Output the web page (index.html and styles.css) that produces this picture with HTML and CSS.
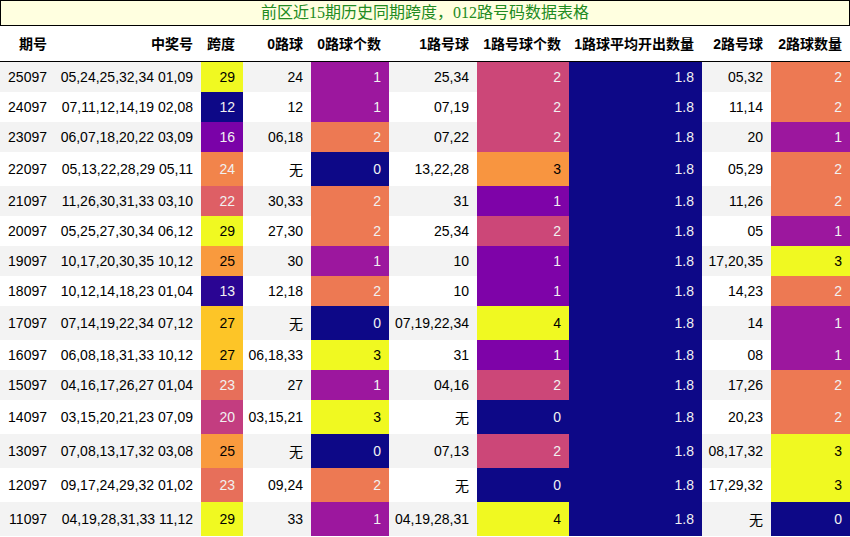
FILE: index.html
```html
<!DOCTYPE html>
<html lang="zh">
<head>
<meta charset="utf-8">
<title>前区近15期历史同期跨度</title>
<link rel="stylesheet" href="styles.css">
</head>
<body>
<div class="title">前区近15期历史同期跨度，012路号码数据表格</div>
<table class="data">
  <thead>
    <tr>
      <th class="w-issue">期号</th>
      <th class="w-win">中奖号</th>
      <th class="w-span">跨度</th>
      <th class="w-r0">0路球</th>
      <th class="w-n0">0路球个数</th>
      <th class="w-r1">1路号球</th>
      <th class="w-n1">1路号球个数</th>
      <th class="w-avg">1路球平均开出数量</th>
      <th class="w-r2">2路号球</th>
      <th class="w-n2">2路球数量</th>
    </tr>
  </thead>
  <tbody>
    <tr><td>25097</td><td>05,24,25,32,34 01,09</td><td class="s29">29</td><td>24</td><td class="q1">1</td><td>25,34</td><td class="h2">2</td><td class="avg">1.8</td><td>05,32</td><td class="q2">2</td></tr>
    <tr><td>24097</td><td>07,11,12,14,19 02,08</td><td class="s12">12</td><td>12</td><td class="q1">1</td><td>07,19</td><td class="h2">2</td><td class="avg">1.8</td><td>11,14</td><td class="q2">2</td></tr>
    <tr><td>23097</td><td>06,07,18,20,22 03,09</td><td class="s16">16</td><td>06,18</td><td class="q2">2</td><td>07,22</td><td class="h2">2</td><td class="avg">1.8</td><td>20</td><td class="q1">1</td></tr>
    <tr><td>22097</td><td>05,13,22,28,29 05,11</td><td class="s24">24</td><td>无</td><td class="q0">0</td><td>13,22,28</td><td class="h3">3</td><td class="avg">1.8</td><td>05,29</td><td class="q2">2</td></tr>
    <tr><td>21097</td><td>11,26,30,31,33 03,10</td><td class="s22">22</td><td>30,33</td><td class="q2">2</td><td>31</td><td class="h1">1</td><td class="avg">1.8</td><td>11,26</td><td class="q2">2</td></tr>
    <tr><td>20097</td><td>05,25,27,30,34 06,12</td><td class="s29">29</td><td>27,30</td><td class="q2">2</td><td>25,34</td><td class="h2">2</td><td class="avg">1.8</td><td>05</td><td class="q1">1</td></tr>
    <tr><td>19097</td><td>10,17,20,30,35 10,12</td><td class="s25">25</td><td>30</td><td class="q1">1</td><td>10</td><td class="h1">1</td><td class="avg">1.8</td><td>17,20,35</td><td class="q3">3</td></tr>
    <tr><td>18097</td><td>10,12,14,18,23 01,04</td><td class="s13">13</td><td>12,18</td><td class="q2">2</td><td>10</td><td class="h1">1</td><td class="avg">1.8</td><td>14,23</td><td class="q2">2</td></tr>
    <tr><td>17097</td><td>07,14,19,22,34 07,12</td><td class="s27">27</td><td>无</td><td class="q0">0</td><td>07,19,22,34</td><td class="h4">4</td><td class="avg">1.8</td><td>14</td><td class="q1">1</td></tr>
    <tr><td>16097</td><td>06,08,18,31,33 10,12</td><td class="s27">27</td><td>06,18,33</td><td class="q3">3</td><td>31</td><td class="h1">1</td><td class="avg">1.8</td><td>08</td><td class="q1">1</td></tr>
    <tr><td>15097</td><td>04,16,17,26,27 01,04</td><td class="s23">23</td><td>27</td><td class="q1">1</td><td>04,16</td><td class="h2">2</td><td class="avg">1.8</td><td>17,26</td><td class="q2">2</td></tr>
    <tr><td>14097</td><td>03,15,20,21,23 07,09</td><td class="s20">20</td><td>03,15,21</td><td class="q3">3</td><td>无</td><td class="h0">0</td><td class="avg">1.8</td><td>20,23</td><td class="q2">2</td></tr>
    <tr><td>13097</td><td>07,08,13,17,32 03,08</td><td class="s25">25</td><td>无</td><td class="q0">0</td><td>07,13</td><td class="h2">2</td><td class="avg">1.8</td><td>08,17,32</td><td class="q3">3</td></tr>
    <tr><td>12097</td><td>09,17,24,29,32 01,02</td><td class="s23">23</td><td>09,24</td><td class="q2">2</td><td>无</td><td class="h0">0</td><td class="avg">1.8</td><td>17,29,32</td><td class="q3">3</td></tr>
    <tr><td>11097</td><td>04,19,28,31,33 11,12</td><td class="s29">29</td><td>33</td><td class="q1">1</td><td>04,19,28,31</td><td class="h4">4</td><td class="avg">1.8</td><td>无</td><td class="q0">0</td></tr>
  </tbody>
</table>
</body>
</html>
```

FILE: styles.css
```css
html, body {
  margin: 0;
  padding: 0;
  background: #ffffff;
}

body {
  font-family: "Liberation Sans", "Noto Sans CJK SC", sans-serif;
  font-size: 14px;
  color: #000000;
}

.title {
  box-sizing: border-box;
  width: 850px;
  height: 26px;
  border: 1px solid #000000;
  background: #ffffe0;
  color: #228b22;
  font-family: "Liberation Serif", "Noto Sans CJK SC", serif;
  font-size: 16px;
  line-height: 24px;
  text-align: center;
}

.data {
  border-collapse: collapse;
  border-spacing: 0;
  table-layout: fixed;
  width: 850px;
}

.data th,
.data td {
  box-sizing: border-box;
  text-align: right;
  white-space: nowrap;
  padding: 7px 8px 7px 0;
}

.data th {
  font-weight: bold;
  line-height: 20px;
  padding-top: 8px;
  padding-bottom: 7px;
  border-bottom: 1px solid #000000;
}

.data tbody tr:nth-child(odd) { background: #f3f3f3; }
.data tbody tr:nth-child(even) { background: #ffffff; }

.w-issue { width: 55px; }
.w-win { width: 146px; }
.w-span { width: 42px; }
.w-r0 { width: 68px; }
.w-n0 { width: 78px; }
.w-r1 { width: 88px; }
.w-n1 { width: 92px; }
.w-avg { width: 133px; }
.w-r2 { width: 69px; }
.w-n2 { width: 79px; }

/* 跨度 column (12 … 29) */
.s12 { background: #0d0887; color: #f1f1f1; }
.s13 { background: #2a0593; color: #f1f1f1; }
.s16 { background: #7a02a8; color: #f1f1f1; }
.s20 { background: #c33d80; color: #f1f1f1; }
.s22 { background: #de5f65; color: #f1f1f1; }
.s23 { background: #e76f5a; color: #f1f1f1; }
.s24 { background: #f2844b; color: #f1f1f1; }
.s25 { background: #f99a3e; color: #000000; }
.s27 { background: #fdc527; color: #000000; }
.s29 { background: #f0f921; color: #000000; }

/* 0路 / 2路 count columns (0 … 3) */
.q0 { background: #0d0887; color: #f1f1f1; }
.q1 { background: #9c179e; color: #f1f1f1; }
.q2 { background: #ed7953; color: #f1f1f1; }
.q3 { background: #f0f921; color: #000000; }

/* 1路 count column (0 … 4) */
.h0 { background: #0d0887; color: #f1f1f1; }
.h1 { background: #7e03a8; color: #f1f1f1; }
.h2 { background: #cc4778; color: #f1f1f1; }
.h3 { background: #f89540; color: #000000; }
.h4 { background: #f0f921; color: #000000; }

/* constant average column */
.avg { background: #0d0887; color: #f1f1f1; }
```
